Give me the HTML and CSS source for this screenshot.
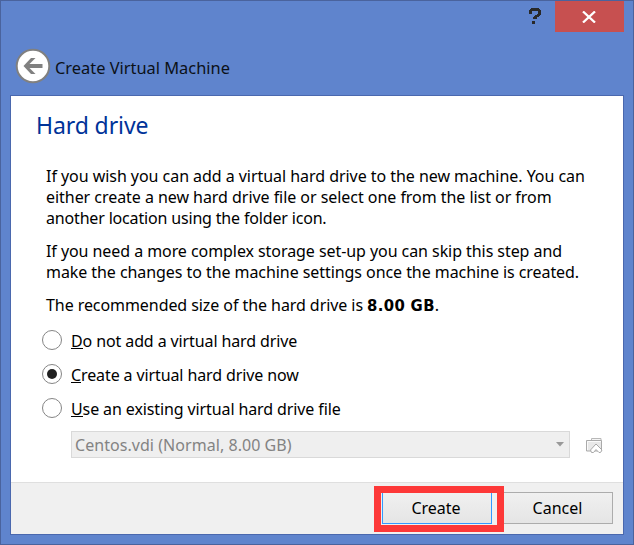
FILE: index.html
```html
<!DOCTYPE html>
<html lang="en">
<head>
<meta charset="utf-8">
<title>Create Virtual Machine</title>
<link rel="stylesheet" href="styles.css">
</head>
<body>
<div class="window">
  <header class="titlebar">
    <svg class="help" viewBox="0 0 12 17" width="12" height="17" aria-label="Help"><path fill="#292929" d="M1 1h1V0h8v1h1v1h1v5h-1v1h-1v1H8v2H4V9h1V8h1V7h2V6h1V3H3v3H0V2h1zM3 13h3v3H3z"/></svg>
    <div class="close"><svg viewBox="0 0 14 12" width="14" height="12" aria-label="Close"><path d="M1 0.5 13 11.5M13 0.5 1 11.5" stroke="#fff" stroke-width="2.3" fill="none"/></svg></div>
  </header>
  <div class="nav">
    <svg class="back" viewBox="0 0 36 36" width="36" height="36" aria-label="Back"><circle cx="18" cy="18" r="16.3" fill="#fff" stroke="#808080" stroke-width="2"/><path d="M16 10h4.500L12.500 18l8 8H16L8.500 18z" fill="#808080"/><path d="M27.500 18H12" stroke="#808080" stroke-width="4"/></svg>
    <span class="name">Create Virtual Machine</span>
  </div>
  <main class="panel">
    <section class="content">
      <h1>Hard drive</h1>
      <div class="text">
        <p><span class="l1">If you wish you can add a virtual hard drive to the new machine. You can</span><br><span class="l1">either create a new hard drive file or select one from the list or from</span><br><span class="l3">another location using the folder icon.</span></p>
        <p class="l4">If you need a more complex storage set-up you can skip this step and<br>make the changes to the machine settings once the machine is created.</p>
        <p class="l6">The recommended size of the hard drive is <b>8.00 GB</b>.</p>
      </div>
      <div class="options">
        <div class="option"><i class="radio"></i><span><u>D</u>o not add a virtual hard drive</span></div>
        <div class="option"><i class="radio checked"></i><span><u>C</u>reate a virtual hard drive now</span></div>
        <div class="option"><i class="radio"></i><span><u>U</u>se an existing virtual hard drive file</span></div>
      </div>
      <div class="disk">
        <div class="select"><span>Centos.vdi (Normal, 8.00 GB)</span><svg viewBox="0 0 8 5" width="8" height="5"><path d="M0 0h8L4 4.6z" fill="#999"/></svg></div>
        <svg class="folder" viewBox="0 0 17 16" width="17" height="16">
          <path d="M5.500 2V.5h9.500V3" fill="#f5f5f5" stroke="#b8b8b8"/>
          <path d="M.5 2.500h15v10.500H.5z" fill="#e8e8e8" stroke="#aaa"/>
          <path d="M1.500 12V3.500H15" fill="none" stroke="#fafafa"/>
          <path d="M10 6 16 12l-1.500 2.500H13L10 11.500 7.500 14.500H5.500L4.500 12z" fill="#fff" stroke="#a8a8a8"/>
        </svg>
      </div>
    </section>
    <footer class="footer">
      <div class="button primary">Create</div>
      <div class="button cancel">Cancel</div>
      <div class="marker"></div>
    </footer>
  </main>
</div>
</body>
</html>
```
FILE: styles.css
```css
* { box-sizing: border-box; }
body { margin: 0; font: 16px/21px "Noto Sans", "Open Sans", sans-serif; color: #000; }
.window { width: 634px; height: 545px; background: #5f84cd; border: 1px solid #4a639d; display: flex; flex-direction: column; }
.titlebar { height: 31px; flex: none; display: flex; justify-content: flex-end; padding-right: 9px; }
.help { margin: 7px 14px 0 0; }
.close { width: 69px; height: 31px; background: #c75050; display: flex; align-items: center; justify-content: center; }
.close svg { margin-right: 1px; }
.nav { height: 63px; flex: none; display: flex; align-items: center; padding: 4px 0 0 14px; }
.name { font-size: 16.4px; margin: 4px 0 0 4px; white-space: nowrap; color: #0c1118; }
.panel { width: 614px; height: 440px; margin-left: 9px; border: 1px solid #4a68ae; background: #fff; display: flex; flex-direction: column; }
.content { height: 386px; padding: 14px 25px 0 25px; white-space: nowrap; }
h1 { margin: 0; font-size: 23px; line-height: 30px; letter-spacing: -.1px; font-weight: 400; color: #003399; }
.text { padding: 26px 0 0 10px; }
.text p { margin: 0 0 12px; }
.l1 { letter-spacing: -.045px; }
.l3 { letter-spacing: -.17px; }
.l4 { letter-spacing: -.065px; }
.l6 { letter-spacing: -.07px; }
.l6 b { font-family: "DejaVu Sans Condensed", "DejaVu Sans", sans-serif; font-stretch: condensed; font-size: 16.5px; letter-spacing: .35px; line-height: 20px; }
.options { padding: 0 0 0 6px; margin-top: -5px; }
.option { height: 34px; display: flex; align-items: center; letter-spacing: -.11px; }
.option span { margin: 2px 0 0 9px; }
.option u { text-decoration: none; display: inline-block; height: 18px; line-height: 21px; border-bottom: 1px solid #000; vertical-align: top; }
.radio { width: 20px; height: 20px; border: 1px solid #858585; border-radius: 50%; background: #fff; display: flex; align-items: center; justify-content: center; }
.radio.checked::after { content: ""; width: 10px; height: 10px; border-radius: 50%; background: #202020; }
.disk { display: flex; padding-left: 35px; margin-top: 6px; }
.select { width: 499px; flex: none; height: 27px; border: 1px solid #d9d9d9; background: #efefef; color: #838383; display: flex; align-items: center; justify-content: space-between; padding: 0 5px 0 3px; letter-spacing: .05px; }
.select span { padding-top: 1px; }
.select svg { margin-bottom: 1px; }
.folder { margin: 7px 0 0 16px; flex: none; }
.footer { flex: 1; position: relative; background: #f0f0f0; border-top: 1px solid #dfdfdf; display: flex; justify-content: flex-end; padding: 9px 10px 0 0; }
.button { width: 111px; height: 32px; border: 1px solid #acacac; background: linear-gradient(#f0f0f0, #e5e5e5); text-align: center; line-height: 31px; }
.button.primary { width: 110px; border-color: #3399ff; margin-right: 10px; padding-right: 2px; }
.marker { position: absolute; left: 363px; top: 3px; width: 130px; height: 46px; border: 7px solid #fd3838; }
```
